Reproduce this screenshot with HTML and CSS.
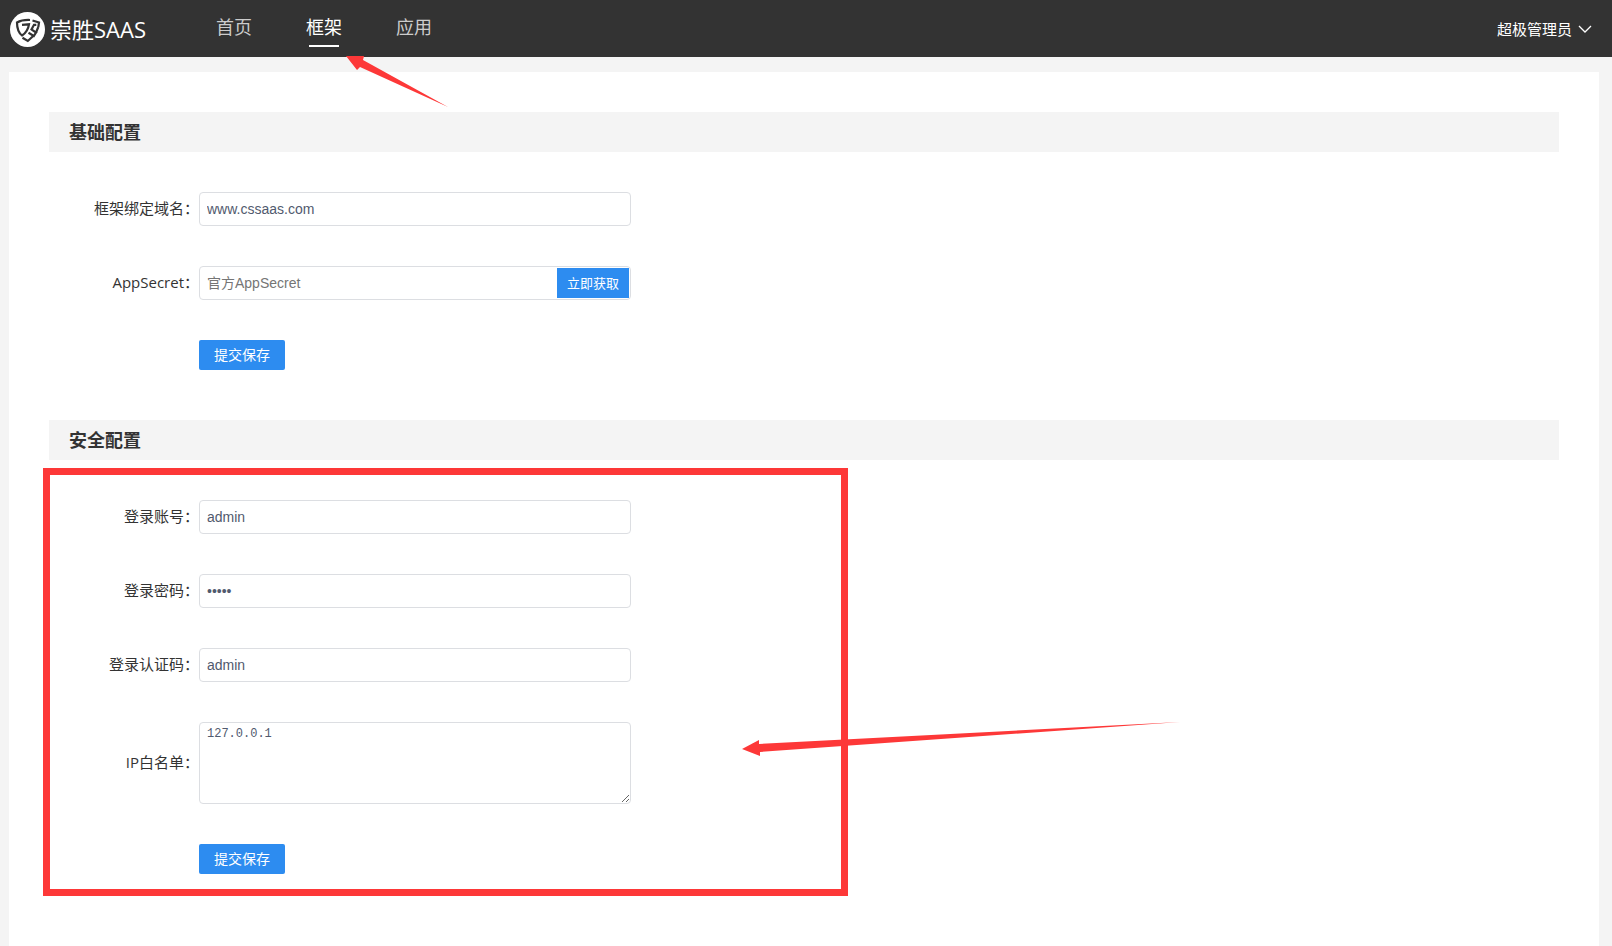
FILE: index.html
```html
<!DOCTYPE html>
<html lang="zh-CN">
<head>
  <meta charset="UTF-8">
  <title>崇胜SAAS</title>
  <link rel="stylesheet" href="styles.css">
</head>
<body>
  <header class="header">
    <a class="logo" href="#">
      <svg class="logo-icon" viewBox="0 0 35 35" aria-hidden="true">
        <circle cx="17.500" cy="17.500" r="17.500" fill="#fff"/>
        <g fill="none" stroke="#333" stroke-width="2.200">
          <path d="M20 8C15 7.800 10.500 8.500 7 10.500C7 16 8.200 20.500 12 23.500C16.500 20.500 18.300 17 19 12.300L12 12.800"/>
          <path d="M22.500 8.500L29 10.500L28.300 15M26.300 12.800L24 12.800L21.500 17.500L26 20.500L23.800 24L18.500 20.800"/>
          <path d="M28.300 15L26 20.500M23.500 23.800L17.800 29L12.500 25.800"/>
        </g>
      </svg>
      <span class="logo-text">崇胜SAAS</span>
    </a>
    <nav class="nav">
      <a class="nav-item" href="#">首页</a>
      <a class="nav-item active" href="#">框架</a>
      <a class="nav-item" href="#">应用</a>
    </nav>
    <button class="user" type="button">
      超极管理员
      <svg class="user-arrow" viewBox="0 0 14 8" aria-hidden="true">
        <path d="M1 1L7 7L13 1" fill="none" stroke="#fff" stroke-width="1.300"/>
      </svg>
    </button>
  </header>

  <main class="main">
    <section>
      <h2 class="title">基础配置</h2>
      <form class="form">
        <div class="row">
          <label class="label" for="domain">框架绑定域名：</label>
          <input class="input" id="domain" type="text" value="www.cssaas.com">
        </div>
        <div class="row">
          <label class="label" for="secret">AppSecret：</label>
          <div class="input group">
            <input class="group-input" id="secret" type="text" placeholder="官方AppSecret">
            <button class="get-btn" type="button">立即获取</button>
          </div>
        </div>
        <div class="row row-btn">
          <button class="btn" type="button">提交保存</button>
        </div>
      </form>
    </section>

    <section>
      <h2 class="title">安全配置</h2>
      <form class="form marked">
        <div class="row">
          <label class="label" for="account">登录账号：</label>
          <input class="input" id="account" type="text" value="admin">
        </div>
        <div class="row">
          <label class="label" for="password">登录密码：</label>
          <input class="input" id="password" type="password" value="admin">
        </div>
        <div class="row">
          <label class="label" for="code">登录认证码：</label>
          <input class="input" id="code" type="text" value="admin">
        </div>
        <div class="row">
          <label class="label" for="ip">IP白名单：</label>
          <textarea class="input textarea" id="ip">127.0.0.1</textarea>
        </div>
        <div class="row row-btn">
          <button class="btn" type="button">提交保存</button>
        </div>
      </form>
    </section>
  </main>

  <svg class="arrow arrow-nav" viewBox="0 0 102 52" aria-hidden="true">
    <path d="M0 0L18 0L17 4L102 51L14 11L11 14Z"/>
  </svg>
  <svg class="arrow arrow-form" viewBox="0 0 438 36" aria-hidden="true">
    <path d="M0 27L17 18L17 22L438 0L18 30L18 34Z"/>
  </svg>
</body>
</html>
```
FILE: styles.css
```css
* {
  box-sizing: border-box;
}
body {
  margin: 0;
  min-height: 100vh;
  display: flex;
  flex-direction: column;
  position: relative;
  background: #f4f4f4;
  color: #333;
  font-family: "Open Sans", "Noto Sans CJK SC", sans-serif;
  font-size: 15px;
}
a {
  color: inherit;
  text-decoration: none;
}
button {
  border: 0;
  padding: 0;
  color: #fff;
  font-family: inherit;
  cursor: pointer;
}

/* header */
.header {
  display: flex;
  align-items: center;
  height: 57px;
  padding: 0 20px 0 10px;
  background: #333;
  color: #fff;
}
.logo {
  display: flex;
  align-items: center;
  gap: 5px;
  padding-top: 2px;
  font-size: 22px;
  line-height: 35px;
}
.logo-icon {
  width: 35px;
  height: 35px;
}
.nav {
  display: flex;
  gap: 54px;
  margin-left: 70px;
}
.nav-item {
  display: flex;
  flex-direction: column;
  align-items: center;
  padding-top: 2px;
  color: #ccc;
  font-size: 18px;
  line-height: 28px;
}
.nav-item::after {
  content: "";
  width: 30px;
  height: 2px;
  margin-top: 4px;
}
.nav-item.active {
  color: #fff;
}
.nav-item.active::after {
  background: #fff;
}
.user {
  display: flex;
  align-items: center;
  gap: 6px;
  margin-left: auto;
  background: none;
  font-size: 15px;
}
.user-arrow {
  width: 14px;
  height: 8px;
}

/* content */
.main {
  flex: 1;
  margin: 15px 13px 0 9px;
  padding: 40px 40px 50px;
  background: #fff;
}
.title {
  margin: 0;
  padding-left: 20px;
  background: #f4f4f4;
  font-size: 18px;
  line-height: 40px;
}
.form {
  display: flex;
  flex-direction: column;
  gap: 40px;
  padding: 40px 0 50px;
}
.row {
  display: flex;
  align-items: center;
}
.row-btn {
  padding-left: 150px;
}
.label {
  width: 150px;
  padding-bottom: 4px;
  text-align: right;
  white-space: nowrap;
}
.input {
  width: 432px;
  height: 34px;
  padding: 0 7px;
  border: 1px solid #dcdee2;
  border-radius: 4px;
  background: #fff;
  color: #515a6e;
  font-family: "Liberation Sans", "Noto Sans CJK SC", sans-serif;
  font-size: 14px;
}
.group {
  display: flex;
  align-items: center;
  padding: 0 1px 0 7px;
}
.group-input {
  flex: 1;
  min-width: 0;
  padding: 0;
  border: 0;
  font: inherit;
}
.group-input::placeholder {
  color: #757575;
}
.get-btn {
  width: 72px;
  height: 30px;
  padding-bottom: 2px;
  background: #2d8cf0;
  font-size: 13px;
}
.btn {
  width: 86px;
  height: 30px;
  padding-bottom: 2px;
  border-radius: 2px;
  background: #2d8cf0;
  font-size: 14px;
}
.textarea {
  height: 82px;
  padding: 4px 7px;
  font-family: "Liberation Mono", monospace;
  font-size: 12px;
  resize: both;
}

/* marks */
.marked {
  position: relative;
}
.marked::after {
  content: "";
  position: absolute;
  top: 8px;
  left: -6px;
  bottom: 28px;
  width: 805px;
  box-sizing: border-box;
  border: 7px solid #fd3838;
  pointer-events: none;
}
.arrow {
  position: absolute;
  fill: #fd3838;
  pointer-events: none;
}
.arrow-nav {
  top: 56px;
  left: 346px;
  width: 102px;
}
.arrow-form {
  top: 722px;
  left: 742px;
  width: 438px;
}
```
